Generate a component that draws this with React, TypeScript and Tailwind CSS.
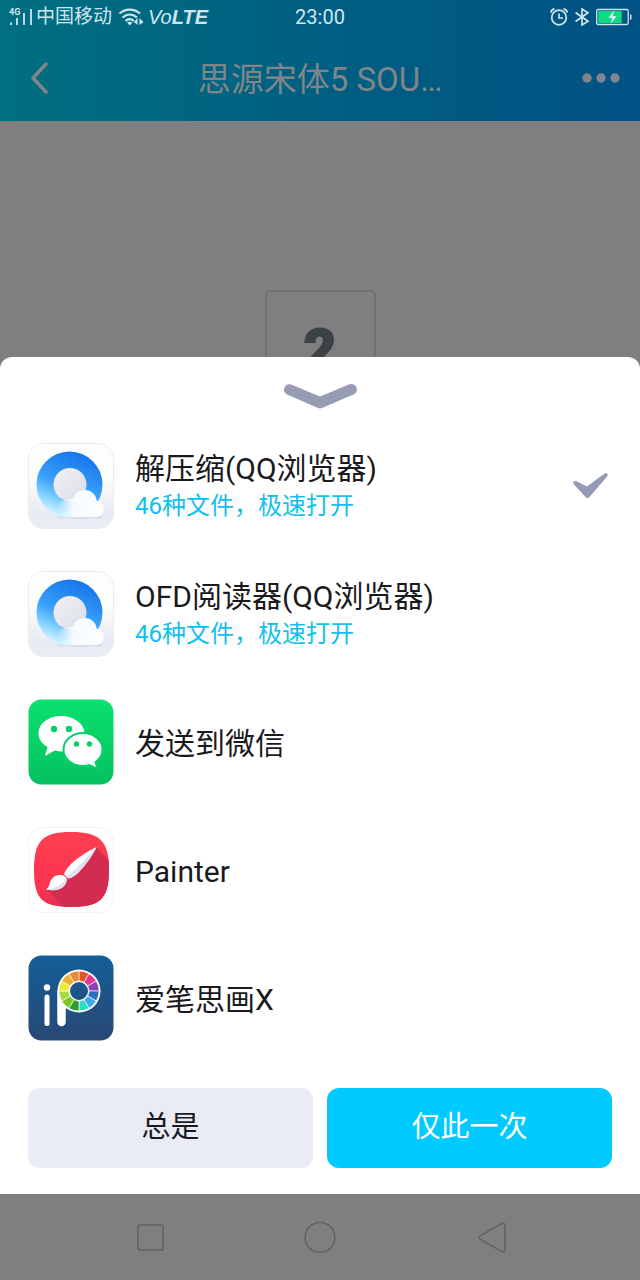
import { useState } from "react";
import type { ReactNode } from "react";

// "Open with" sheet shown over a file preview.

const WHEEL = [
  "#dd5524",
  "#e0359b",
  "#8d40b4",
  "#2a6fc4",
  "#3faae4",
  "#30dac8",
  "#2c9b32",
  "#7ac92c",
  "#a6dc40",
  "#eeea3c",
  "#f0b034",
  "#ea8a2e",
];

function wedge(i: number) {
  const cx = 51;
  const cy = 36;
  const at = (deg: number, r: number) => {
    const a = ((deg - 90) * Math.PI) / 180;
    return `${(cx + r * Math.cos(a)).toFixed(2)} ${(cy + r * Math.sin(a)).toFixed(2)}`;
  };
  const from = i * 30;
  const to = from + 30;
  return `M${at(from, 20)}A20 20 0 0 1 ${at(to, 20)}L${at(to, 10)}A10 10 0 0 0 ${at(from, 10)}Z`;
}

function BrowserIcon({ id }: { id: string }) {
  return (
    <svg viewBox="0 0 86 86" className="size-[86px] shrink-0" aria-hidden="true">
      <defs>
        <linearGradient id={`${id}-tile`} x1="0" y1="0" x2="0" y2="1">
          <stop offset="0.4" stopColor="#fdfdfe" />
          <stop offset="0.85" stopColor="#e8eaf3" />
          <stop offset="1" stopColor="#eceef5" />
        </linearGradient>
        <linearGradient id={`${id}-ring`} x1="0.35" y1="1" x2="0.7" y2="0.1">
          <stop offset="0" stopColor="#dcf3ff" />
          <stop offset="0.25" stopColor="#80d0ff" />
          <stop offset="0.5" stopColor="#3aa2fa" />
          <stop offset="1" stopColor="#1a79ee" />
        </linearGradient>
        <linearGradient id={`${id}-core`} x1="0" y1="0" x2="1" y2="1">
          <stop offset="0" stopColor="#f2f3f6" />
          <stop offset="1" stopColor="#d9dbe5" />
        </linearGradient>
        <linearGradient id={`${id}-cloud`} x1="0" y1="0.3" x2="1" y2="0.3">
          <stop offset="0" stopColor="#e6f6ff" stopOpacity="0" />
          <stop offset="0.35" stopColor="#f4fbff" />
          <stop offset="1" stopColor="#ffffff" />
        </linearGradient>
      </defs>
      <rect x="0.5" y="0.5" width="85" height="85" rx="15" fill={`url(#${id}-tile)`} stroke="#ebecf1" />
      <ellipse cx="52" cy="74" rx="23" ry="1.500" fill="#cdd3e2" />
      <circle cx="41.500" cy="41.500" r="33" fill={`url(#${id}-ring)`} />
      <circle cx="42" cy="41.500" r="16.500" fill={`url(#${id}-core)`} />
      <path
        d="M36 74.300c-5-1-8-4-8-8 0-6 6-10.300 17-10.800 2-5.500 6-8.500 11.500-8.500 6.500 0 11.500 4.500 12.300 10.700 4.200 1 6.700 4.300 6.700 8.300 0 5-4 8.300-8.500 8.300z"
        fill={`url(#${id}-cloud)`}
      />
    </svg>
  );
}

function WeChatIcon() {
  return (
    <svg viewBox="0 0 86 86" className="size-[86px] shrink-0" aria-hidden="true">
      <defs>
        <linearGradient id="wechat" x1="0" y1="0" x2="0" y2="1">
          <stop offset="0" stopColor="#0ae06e" />
          <stop offset="1" stopColor="#05c160" />
        </linearGradient>
      </defs>
      <rect x="0.5" y="0.5" width="85" height="85" rx="13" fill="url(#wechat)" />
      <path d="M33 17C20.500 17 10.500 24.500 10.500 34.500c0 5.500 3.500 10.500 9 13.500l-2.500 9 9.500-5.500c2.500.7 5 1 7.500 1 12.500 0 22.500-8 22.500-18S45.500 17 33 17z" fill="#fff" />
      <path
        d="M55 34c-10.500 0-19.500 7-19.500 16.500s9 16.500 19.500 16.500c2.300 0 4.500-.3 6.500-1l8 4-2-7c4.500-3 7-7.700 7-12.500C74.500 41 65.500 34 55 34z"
        fill="#fff"
        stroke="#08d068"
        strokeWidth="2"
      />
      <g fill="#08d068">
        <circle cx="26" cy="30" r="3.200" />
        <circle cx="41" cy="30" r="3.200" />
        <circle cx="48.500" cy="45" r="2.700" />
        <circle cx="61.500" cy="45" r="2.700" />
      </g>
    </svg>
  );
}

function PainterIcon() {
  return (
    <svg viewBox="0 0 86 86" className="size-[86px] shrink-0" aria-hidden="true">
      <defs>
        <linearGradient id="painter" x1="0" y1="0" x2="0" y2="1">
          <stop offset="0" stopColor="#ff4050" />
          <stop offset="0.7" stopColor="#fb3450" />
          <stop offset="1" stopColor="#e02f55" />
        </linearGradient>
        <clipPath id="painter-clip">
          <path d="M43 5c29 0 38 9 38 38s-9 37-38 37S6 72 6 43 14 5 43 5z" />
        </clipPath>
      </defs>
      <rect x="0.5" y="0.5" width="85" height="85" rx="14" fill="#fff" stroke="#f3f3f3" />
      <g clipPath="url(#painter-clip)">
        <path d="M0 0h86v86H0z" fill="url(#painter)" />
        <path d="M68 20l18 18v48H42L18 62l18-8z" fill="#d22d50" />
      </g>
      <path d="M68.500 20C60 24 49 31 43.500 36.500 39.500 40.500 37 44 36 47.500l4.500 4c3.500-.8 7-3 10-6C56 39.500 64 30 68.500 20z" fill="#fff" />
      <path d="M68.500 20C64 30 56 39.500 50.500 45.500c-3 3-6.500 5.200-10 6l-2-1.800C49 41 59 31 68.500 20z" fill="#e3e1ef" />
      <path d="M33 48c-4-.5-8 1.500-10 5-2 3.500-1 6.500-5 9.500 8 1.800 15 .5 18.500-4 2-2.500 2.500-5 2-7.500-1-1.500-3.500-3-5.500-3z" fill="#fff" />
      <path d="M18 62.500c8 1.800 15 .5 18.500-4 2-2.500 2.500-5 2-7.500C35 57 27 61.500 18 62.500z" fill="#e3e1ef" />
    </svg>
  );
}

function IbisIcon() {
  return (
    <svg viewBox="0 0 86 86" className="size-[86px] shrink-0" aria-hidden="true">
      <defs>
        <linearGradient id="ibis" x1="0" y1="0" x2="0" y2="1">
          <stop offset="0" stopColor="#145e98" />
          <stop offset="1" stopColor="#284874" />
        </linearGradient>
      </defs>
      <rect x="0.5" y="0.5" width="85" height="85" rx="13" fill="url(#ibis)" />
      <circle cx="19" cy="32.500" r="3.200" fill="#fff" />
      <path d="M19 42v26.500" stroke="#fff" strokeWidth="5" strokeLinecap="round" />
      <path d="M33.500 37v30" stroke="#fff" strokeWidth="8.500" strokeLinecap="round" />
      <path fillRule="evenodd" d="M51 14.500a21.500 21.500 0 1 1 0 43 21.500 21.500 0 0 1 0-43zm0 12.500a9 9 0 1 0 0 18 9 9 0 0 0 0-18z" fill="#fff" />
      {WHEEL.map((color, i) => (
        <path key={color} d={wedge(i)} fill={color} stroke="#fff" strokeWidth="0.6" />
      ))}
    </svg>
  );
}

interface AppOption {
  id: string;
  name: string;
  hint?: string;
  icon: ReactNode;
}

const OPTIONS: AppOption[] = [
  { id: "unzip", name: "解压缩(QQ浏览器)", hint: "46种文件，极速打开", icon: <BrowserIcon id="unzip" /> },
  { id: "ofd", name: "OFD阅读器(QQ浏览器)", hint: "46种文件，极速打开", icon: <BrowserIcon id="ofd" /> },
  { id: "wechat", name: "发送到微信", icon: <WeChatIcon /> },
  { id: "painter", name: "Painter", icon: <PainterIcon /> },
  { id: "ibis", name: "爱笔思画X", icon: <IbisIcon /> },
];

function StatusBar() {
  return (
    <div className="grid h-[34px] grid-cols-[1fr_auto_1fr] items-center px-2 text-[#cfe6f0]">
      <div className="flex items-center">
        <svg viewBox="0 0 26 20" className="h-5 w-[26px]" role="img" aria-label="4G">
          <text x="1" y="8" fontSize="9" fontWeight="700" fontFamily="Roboto" fill="currentColor">
            4G
          </text>
          <path d="M3 15.500v2.500M9 11v7M16 6v12M23 2v16" stroke="currentColor" strokeWidth="1.800" />
        </svg>
        <span className="ml-0.5 text-[19px] leading-6">中国移动</span>
        <svg viewBox="0 0 26 20" className="ml-1.5 h-5 w-[26px]" aria-hidden="true">
          <g fill="none" stroke="currentColor" strokeWidth="2.200">
            <path d="M1.500 6.500c6-5.300 14.500-5.300 20.500 0" />
            <path d="M4.500 10.500c4.500-4 10-4 14.500 0" />
            <path d="M7.500 14c2.700-2.300 5.800-2.300 8.500 0" />
          </g>
          <path d="M9 15.500q2.700-1.500 5.500 0l-2.700 3zM19.500 11v7l-3.500-3zM21.500 11v7l4-3z" fill="currentColor" />
        </svg>
        <span className="ml-1 font-['Liberation_Sans'] text-[20px] leading-6 italic">
          Vo<b>LTE</b>
        </span>
      </div>
      <time className="text-[20px] leading-6">23:00</time>
      <div className="flex items-center justify-end gap-1.5">
        <svg viewBox="0 0 18 18" className="size-[18px]" fill="none" stroke="currentColor" strokeWidth="1.700" aria-hidden="true">
          <circle cx="9" cy="9.500" r="7.300" />
          <path d="M9 5.500v4.500h4M.8 4.500c.3-2 1.700-3.300 3.700-3.700M17.200 4.500c-.3-2-1.700-3.300-3.700-3.700" />
        </svg>
        <svg viewBox="0 0 16 18" className="h-[18px] w-4" fill="none" stroke="currentColor" strokeWidth="1.700" aria-hidden="true">
          <path d="M1.500 4.500L14 13.200 8 17V1l6 3.800L1.500 13.500" />
        </svg>
        <svg viewBox="0 0 36 18" className="h-[18px] w-9" aria-hidden="true">
          <rect x="0.7" y="1.500" width="31.500" height="15" rx="1.500" fill="none" stroke="currentColor" strokeWidth="1.300" />
          <path d="M2.200 3h23.500v12H2.200z" fill="#0bdc84" />
          <path d="M34 6.500h1.500v5H34z" fill="currentColor" />
          <path d="M18 2.500l-5.500 7.200h3.800L15 15.500l5.500-7.200h-3.800z" fill="#e8fbff" />
        </svg>
      </div>
    </div>
  );
}

export default function App() {
  const [selected, setSelected] = useState("unzip");

  return (
    <div className="flex min-h-screen flex-col bg-[#7f7f7f] font-[Roboto,'Noto_Sans_CJK_SC',sans-serif]">
      <header className="bg-linear-to-r/srgb from-[#006f80] via-[#005f82] to-[#005284]">
        <StatusBar />
        <div className="flex h-[87px] items-center justify-between px-5 text-[#7f8589]">
          <button type="button" aria-label="返回" className="flex w-12 justify-start pl-2.5">
            <svg viewBox="0 0 20 32" className="h-8 w-5" fill="none" stroke="currentColor" strokeWidth="3.500" strokeLinecap="round" strokeLinejoin="round">
              <path d="M16 2L3 16l13 14" />
            </svg>
          </button>
          <h1 className="pt-1 text-[33px] leading-10">思源宋体5 SOU…</h1>
          <button type="button" aria-label="更多" className="flex w-12 justify-end">
            <svg viewBox="0 0 38 10" className="h-2.5 w-[38px]" fill="currentColor">
              <circle cx="5" cy="5" r="4.700" />
              <circle cx="19" cy="5" r="4.700" />
              <circle cx="33" cy="5" r="4.700" />
            </svg>
          </button>
        </div>
      </header>

      <main className="flex flex-1 flex-col">
        <div className="flex min-h-[236px] flex-1 items-end justify-center">
          <div className="h-[67px] w-[111px] overflow-hidden rounded-t-md border-2 border-b-0 border-[#707070] pt-7 text-center text-[56px] leading-[60px] font-black text-[#3c4347] [-webkit-text-stroke:2px_#3c4347]">
            2
          </div>
        </div>

        <section aria-label="打开方式" className="rounded-t-xl bg-white px-7 pb-[26px] text-[29px] text-[#1a1a1e]">
          <button type="button" aria-label="收起" className="flex h-[65px] w-full justify-center pt-[26px]">
            <svg viewBox="0 0 74 26" className="h-[26px] w-[74px]" fill="#979cb5">
              <path d="M7.500 1.300L37 13.500 66.500 1.300a5.500 5.500 0 0 1 4.500 10L39 25q-2 .8-4 0L3.500 11.300a5.500 5.500 0 0 1 4-10z" />
            </svg>
          </button>

          <ul>
            {OPTIONS.map((option) => (
              <li key={option.id}>
                <button
                  type="button"
                  onClick={() => setSelected(option.id)}
                  aria-pressed={selected === option.id}
                  className="flex h-32 w-full items-center gap-[21px] text-left"
                >
                  {option.icon}
                  <span className="flex-1 pt-1">
                    <span className="block text-[30px] leading-9">{option.name}</span>
                    {option.hint ? (
                      <span className="block text-2xl leading-[38px] text-[#12bfee]">{option.hint}</span>
                    ) : null}
                  </span>
                  {selected === option.id ? (
                    <svg viewBox="0 0 36 28" className="mr-1 h-7 w-9" fill="#979cb5" aria-hidden="true">
                      <path d="M4.500 9.200l10.500 5.300L32.500 1.500q1.500-1 2.700.2 1 1.200 0 2.700L17 25.500q-1.500 1.500-3 0L1.700 12.300q-1-1.500 0-2.700 1.200-1.200 2.800-.4z" />
                    </svg>
                  ) : null}
                </button>
              </li>
            ))}
          </ul>

          <div className="mt-[26px] grid grid-cols-2 gap-3.5">
            <button type="button" className="h-20 rounded-xl bg-[#e9ecf4]">
              总是
            </button>
            <button type="button" className="h-20 rounded-xl bg-[#00caff] text-white">
              仅此一次
            </button>
          </div>
        </section>
      </main>

      <nav className="grid h-[86px] grid-cols-[repeat(3,170px)] justify-center text-[#626262]">
        <button type="button" aria-label="最近任务" className="flex items-center justify-center">
          <svg viewBox="0 0 34 34" className="size-[34px]" fill="none" stroke="currentColor" strokeWidth="1.500">
            <rect x="5" y="5" width="25" height="25" rx="2" />
          </svg>
        </button>
        <button type="button" aria-label="主屏幕" className="flex items-center justify-center">
          <svg viewBox="0 0 34 34" className="size-[34px]" fill="none" stroke="currentColor" strokeWidth="1.500">
            <circle cx="17" cy="17.500" r="15" />
          </svg>
        </button>
        <button type="button" aria-label="返回上一页" className="flex items-center justify-center">
          <svg viewBox="0 0 34 34" className="size-[34px]" fill="none" stroke="currentColor" strokeWidth="1.500">
            <path d="M28 3.800Q32 2 32 6v23q0 4-4 2.200L7.500 19.500q-2.500-2 0-4z" />
          </svg>
        </button>
      </nav>
    </div>
  );
}
